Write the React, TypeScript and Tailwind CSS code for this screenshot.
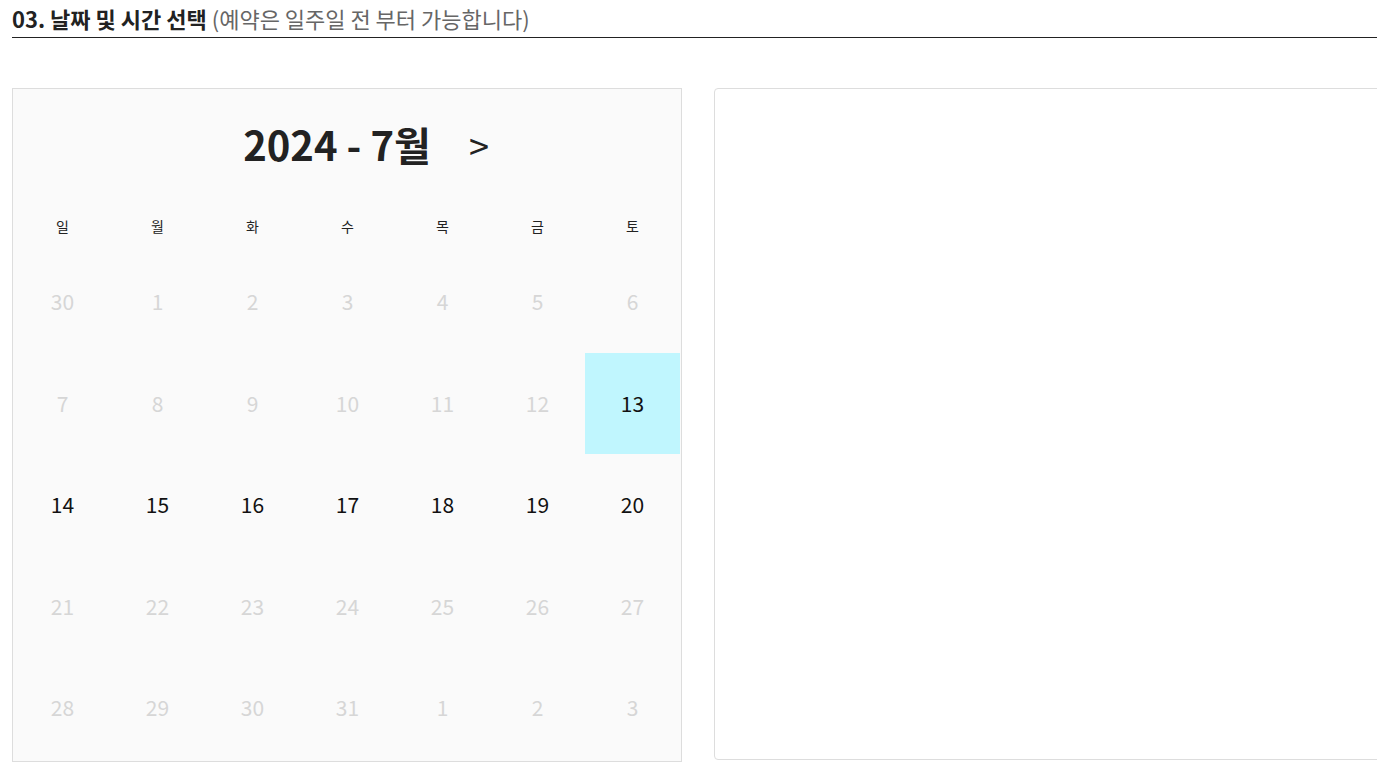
import React from 'react';

const font = { fontFamily: '"Noto Sans CJK KR", "Noto Sans", sans-serif' };

type Day = { n: number; active?: boolean; selected?: boolean };

const rows: Day[][] = [
  [30, 1, 2, 3, 4, 5, 6].map((n) => ({ n })),
  [7, 8, 9, 10, 11, 12].map((n) => ({ n } as Day)).concat([{ n: 13, active: true, selected: true }]),
  [14, 15, 16, 17, 18, 19, 20].map((n) => ({ n, active: true })),
  [21, 22, 23, 24, 25, 26, 27].map((n) => ({ n })),
  [28, 29, 30, 31, 1, 2, 3].map((n) => ({ n })),
];

const weekdays = ['일', '월', '화', '수', '목', '금', '토'];

export default function App() {
  return (
    <div className="w-full h-[763px] overflow-hidden bg-white" style={font}>
      <div className="w-[1420px] pl-3">
        <div className="h-[38px] border-b border-[#222] flex items-center pb-[2px]">
          <h2 className="text-[22px] leading-none text-[#222]">
            <span className="font-bold">03. 날짜 및 시간 선택</span>{' '}
            <span className="text-[#666]">(예약은 일주일 전 부터 가능합니다)</span>
          </h2>
        </div>

        <div className="flex gap-8 mt-[50px]">
          <div className="w-[670px] h-[674px] border border-[#dddddd] bg-[#fafafa] shrink-0">
            <div className="pt-[27px] pl-[38px] flex items-center justify-center h-[84px]">
              <span className="text-[40px] font-bold leading-[57px] text-[#222] mr-[38px]">2024 - 7월</span>
              <button className="text-[36px] leading-[57px] text-[#222]">&gt;</button>
            </div>
            <div className="pl-[2px] mt-[28px] grid grid-cols-[repeat(7,95px)]">
              {weekdays.map((w) => (
                <div key={w} className="h-[50px] flex items-center justify-center text-[14px] text-[#222]">
                  {w}
                </div>
              ))}
            </div>
            <div className="pl-[2px] grid grid-cols-[repeat(7,95px)]">
              {rows.flat().map((d, i) => (
                <div
                  key={i}
                  className={`h-[101.6px] flex items-center justify-center text-[21px] ${
                    d.selected ? 'bg-[#c0f6fe] text-[#111]' : d.active ? 'text-[#111]' : 'text-[#d6d6d6]'
                  }`}
                >
                  {d.n}
                </div>
              ))}
            </div>
          </div>

          <div className="w-[700px] h-[672px] border border-[#dddddd] rounded-[4px] bg-white shrink-0"></div>
        </div>
      </div>
    </div>
  );
}
